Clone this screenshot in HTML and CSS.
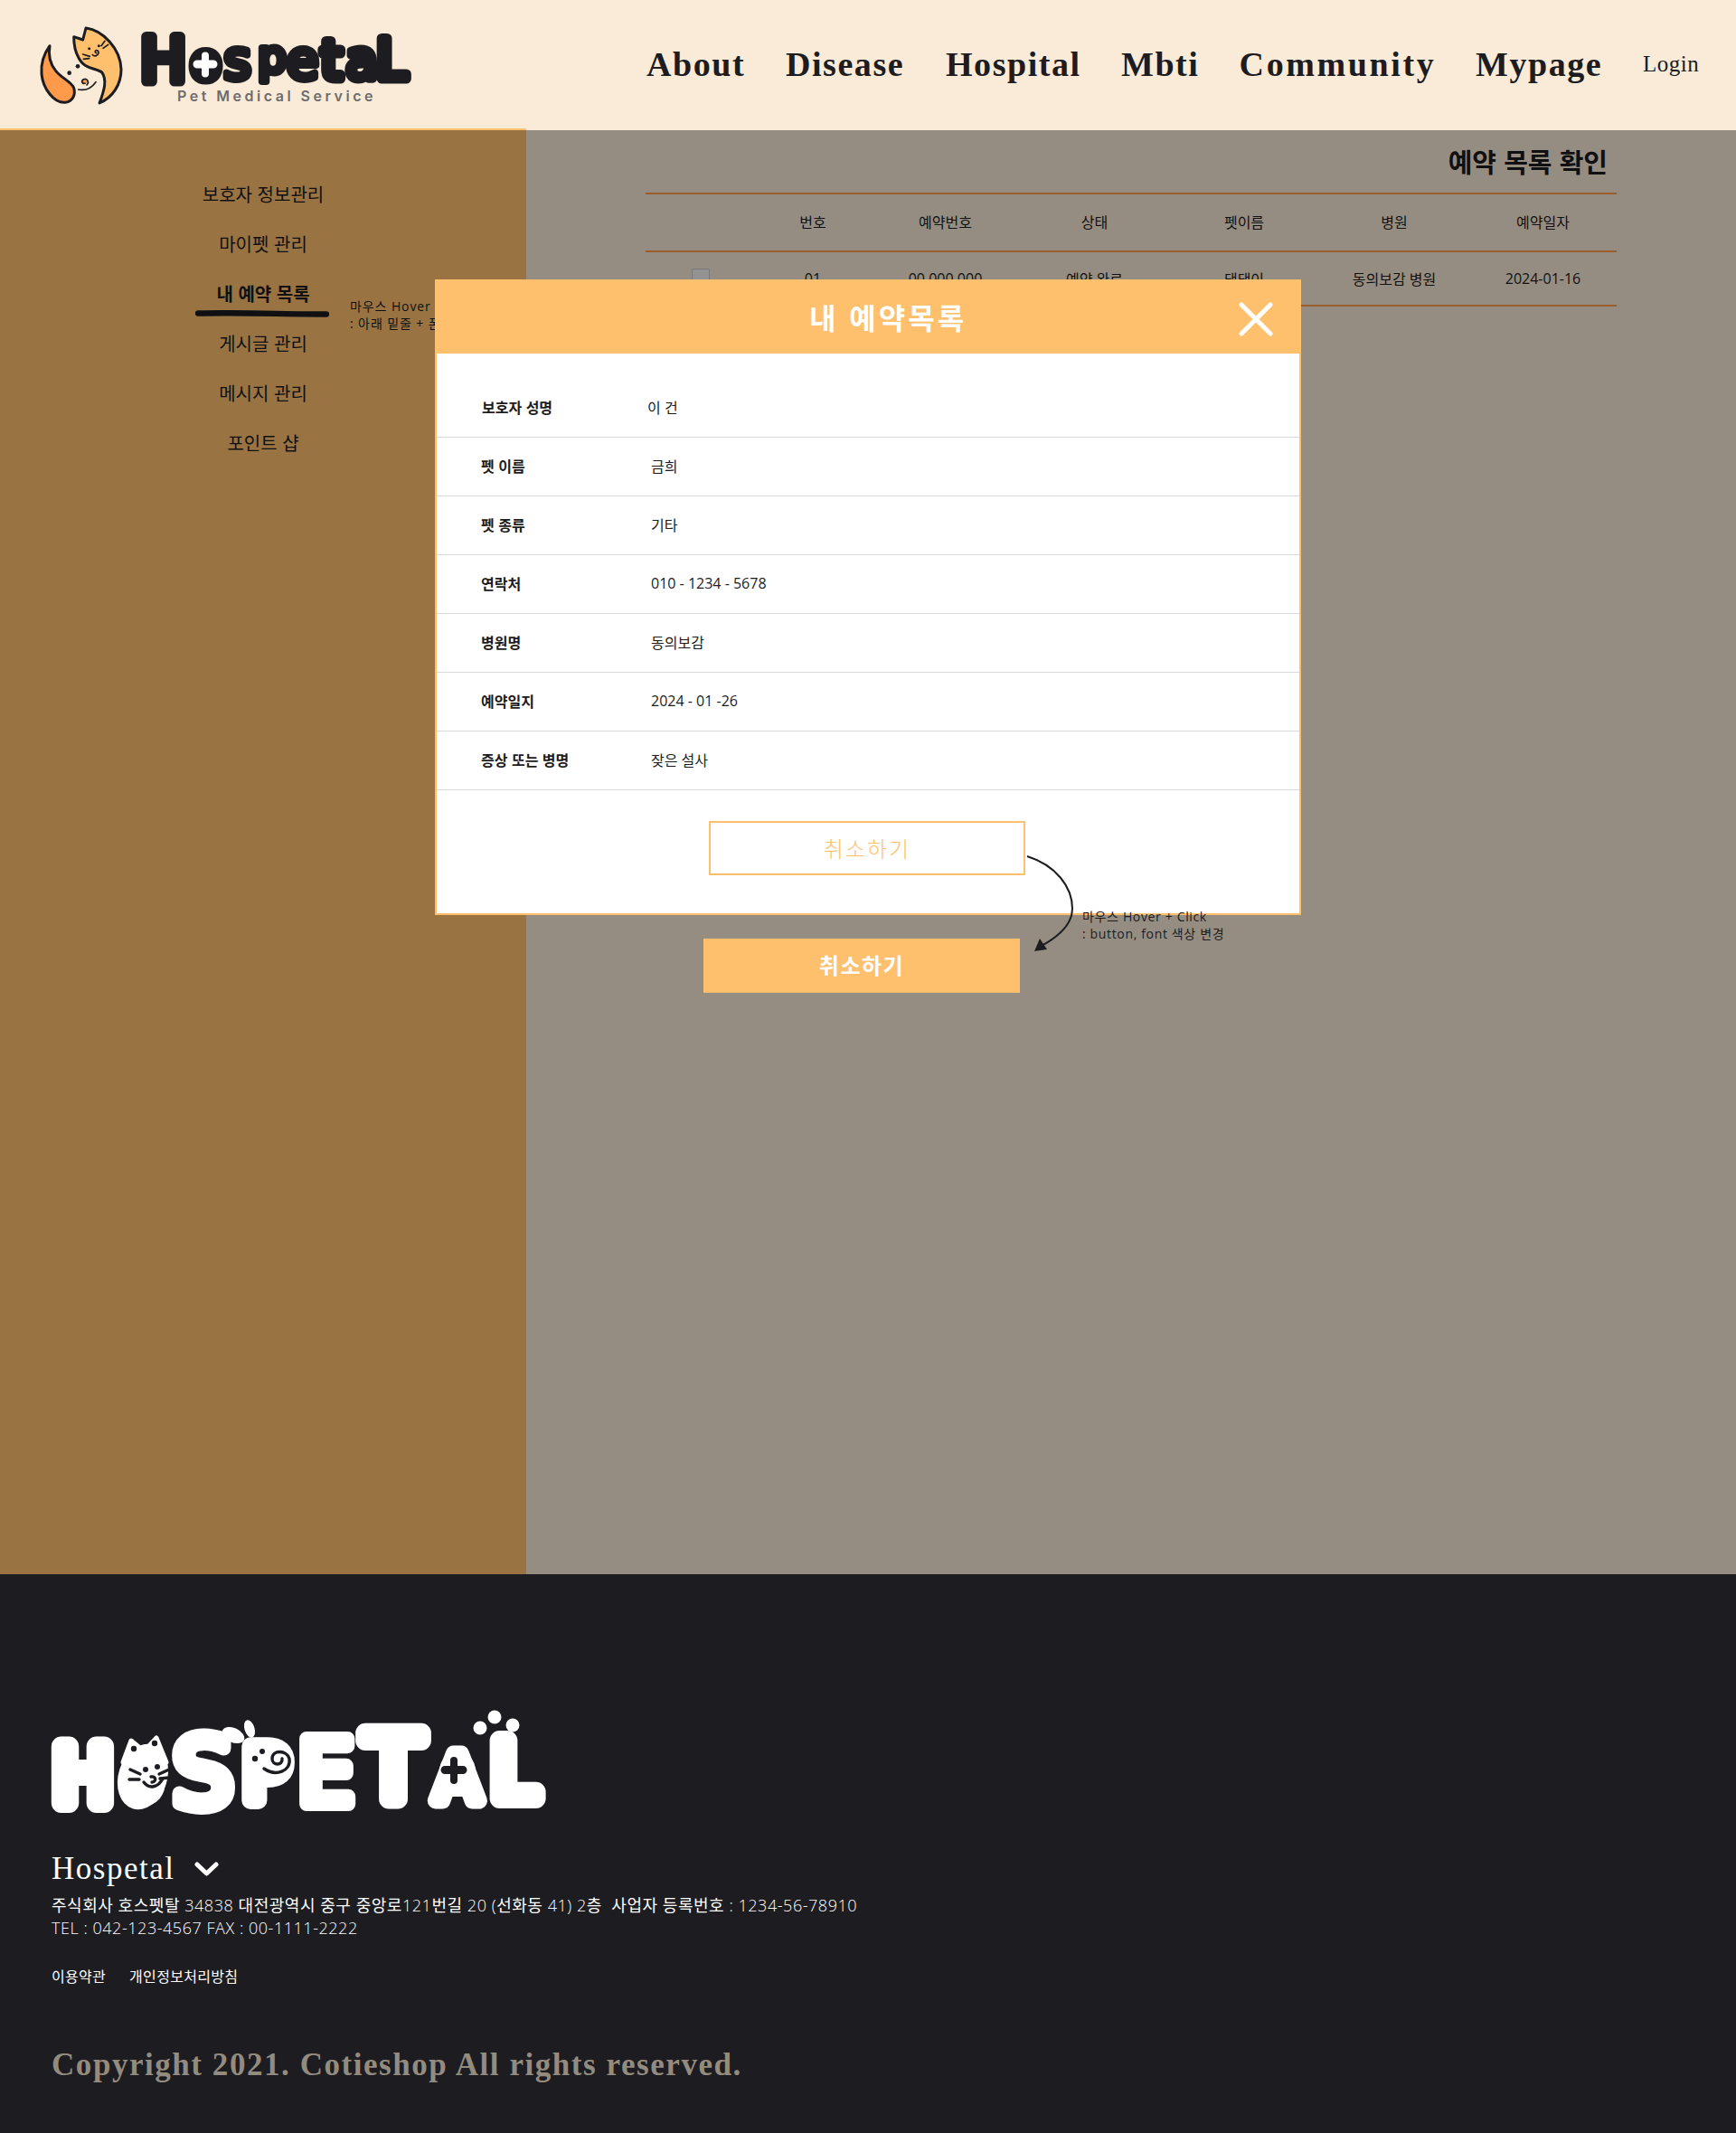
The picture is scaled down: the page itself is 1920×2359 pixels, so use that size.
FILE: index.html
```html
<!DOCTYPE html>
<html lang="ko">
<head>
<meta charset="utf-8">
<title>Hospetal</title>
<link rel="stylesheet" href="styles.css">
</head>
<body>
<header class="site-header">
  <a class="brand">
    <svg class="brand-mark" viewBox="0 0 600 330" aria-hidden="true">
      <path class="m-flame" d="M75 92C55 120 45 150 48 185C52 235 90 282 125 280C150 278 162 255 155 232C148 212 115 200 95 175C75 150 70 120 75 92Z"/>
      <path class="m-cat" d="M195 33C250 40 310 100 312 170C312 220 285 262 240 282C256 240 266 205 248 180C230 165 190 172 170 130C158 108 155 85 155 62L185 72Z"/>
      <circle class="m-dot" cx="168" cy="160" r="7"/><circle class="m-dot" cx="140" cy="182" r="7"/>
      <circle class="m-dot" cx="206" cy="101" r="4.5"/><circle class="m-dot" cx="238" cy="92" r="4.5"/>
      <path class="m-line" d="M185 120L208 127M187 136L206 134M246 92L258 76M252 100L269 88"/>
      <path class="m-line" d="M217 122C228 132 244 116 234 108C226 104 222 114 230 116"/>
      <circle class="m-nose" cx="190" cy="212" r="8"/>
      <path class="m-line" d="M170 237C195 242 214 232 228 212M198 222C208 212 198 198 186 204C178 210 184 220 192 216"/>
    </svg>
    <span class="brand-type">
      <svg class="brand-word" viewBox="0 0 300 70" role="img" aria-label="Hospetal">
        <text class="word-dark" x="24.5 71.5 106.5 145 178.5 210.5 244 277" y="61.5 58.5 59 52 59 58.5 59 58.5"><tspan font-size="68">H</tspan><tspan font-size="54">o</tspan><tspan font-size="58" stroke-width="8">s</tspan><tspan font-size="50" stroke-width="8">p</tspan><tspan font-size="58" stroke-width="8">e</tspan><tspan font-size="58">t</tspan><tspan font-size="58" stroke-width="9">a</tspan><tspan font-size="60">L</tspan></text>
        <path class="word-plus" d="M67 33.500a4 4 0 0 1 8 0v5h5a4 4 0 0 1 0 9h-5v6a4 4 0 0 1-8 0v-6h-5a4 4 0 0 1 0-9h5z"/>
      </svg>
      <span class="brand-sub">Pet Medical Service</span>
    </span>
  </a>
  <nav class="main-nav">
    <a>About</a><a>Disease</a><a>Hospital</a><a>Mbti</a><a class="wide">Community</a><a>Mypage</a>
    <a class="login">Login</a>
  </nav>
  <span class="header-line"></span>
</header>

<main class="page">
  <aside class="side">
    <a>보호자 정보관리</a>
    <a>마이펫 관리</a>
    <a class="active">내 예약 목록<svg class="scribble" viewBox="0 0 148 8" aria-hidden="true"><path d="M3 3.500C50 2.500 100 4.500 145 4.500"/></svg></a>
    <a>게시글 관리</a>
    <a>메시지 관리</a>
    <a>포인트 샵</a>
    <p class="note note-side">마우스 Hover + Click<br>: 아래 밑줄 + 폰트 변경</p>
  </aside>
  <section class="content">
    <h1 class="content-title">예약 목록 확인</h1>
    <div class="grid grid-head">
      <span></span><span>번호</span><span>예약번호</span><span>상태</span><span>펫이름</span><span>병원</span><span>예약일자</span>
    </div>
    <div class="grid grid-row">
      <span><i class="check"></i></span><span>01</span><span>00.000.000</span><span>예약 완료</span><span>댕댕이</span><span>동의보감 병원</span><span>2024-01-16</span>
    </div>
  </section>
  <div class="dim"></div>

  <div class="modal">
    <div class="modal-head">
      <h2>내 예약목록</h2>
      <svg class="close" viewBox="0 0 38 38" aria-hidden="true"><path d="M3 3L35 35M35 3L3 35"/></svg>
    </div>
    <dl class="info">
      <div class="info-row first"><dt>보호자 성명</dt><dd>이 건</dd></div>
      <div class="info-row"><dt>펫 이름</dt><dd>금희</dd></div>
      <div class="info-row"><dt>펫 종류</dt><dd>기타</dd></div>
      <div class="info-row"><dt>연락처</dt><dd>010 - 1234 - 5678</dd></div>
      <div class="info-row"><dt>병원명</dt><dd>동의보감</dd></div>
      <div class="info-row"><dt>예약일지</dt><dd>2024 - 01 -26</dd></div>
      <div class="info-row"><dt>증상 또는 병명</dt><dd>잦은 설사</dd></div>
    </dl>
    <div class="modal-foot"><button class="btn-outline">취소하기</button></div>
  </div>

  <button class="btn-fill">취소하기</button>
  <svg class="arrow" viewBox="0 0 70 120" aria-hidden="true">
    <path class="arrow-line" d="M4 4C36 14 54 38 54 62C54 78 40 92 20 103"/>
    <path class="arrow-head" d="M12 109L26 107L18 95Z"/>
  </svg>
  <p class="note note-btn">마우스 Hover + Click<br>: button, font 색상 변경</p>
</main>

<footer class="site-footer">
  <div class="foot-logo">
    <svg viewBox="0 0 560 125" role="img" aria-label="HOSPETAL">
      <text class="word-light" x="34.500 101.500 167.500 237 303.500 378 449 511.500" y="107 105 111 104 108 103 104 102"><tspan font-size="85">H</tspan><tspan font-size="60" stroke-width="8">O</tspan><tspan font-size="105" stroke-width="16">S</tspan><tspan font-size="82" stroke-width="20">P</tspan><tspan font-size="98" stroke-width="16">E</tspan><tspan font-size="100">T</tspan><tspan font-size="72" stroke-width="18">A</tspan><tspan font-size="88">L</tspan></text>
      <path class="ear" d="M79 62L88 38L100 48ZM104 48L116 35L127 62Z"/>
      <ellipse class="word-fill" cx="101" cy="78" rx="27" ry="37" transform="rotate(18 101 78)"/>
      <circle class="ink" cx="91" cy="47" r="3.200"/><circle class="ink" cx="114" cy="41" r="3.200"/>
      <circle class="ink" cx="104" cy="70" r="3"/><circle class="ink" cx="117" cy="67" r="3"/>
      <path class="ink-line" d="M87 70L98 75M86 81L97 81M119 75L130 70M120 80L130 79"/>
      <path class="ink-line" d="M102 84C108 92 118 90 123 80M111 84C116 84 116 77 110 78"/>
      <ellipse class="word-fill" cx="201" cy="32" rx="13" ry="8" transform="rotate(25 201 32)"/>
      <ellipse class="word-fill" cx="219" cy="25" rx="5.500" ry="10" transform="rotate(-18 219 25)"/>
      <ellipse class="word-fill" cx="243" cy="58" rx="20" ry="21"/>
      <circle class="ink" cx="225" cy="58" r="3.200"/><circle class="ink" cx="233" cy="50" r="3"/>
      <path class="ink-line" d="M235 69C248 78 265 72 263 58C260 48 244 48 244 58C244 66 256 66 255 58"/>
      <ellipse class="word-fill" cx="449" cy="72" rx="20" ry="22"/>
      <path class="word-plus-dark" d="M441 60a4 4 0 0 1 8 0v6h6a4 4 0 0 1 0 9h-6v7a4 4 0 0 1-8 0v-7h-6a4 4 0 0 1 0-9h6z"/>
      <circle class="word-fill" cx="474" cy="24" r="7.500"/><circle class="word-fill" cx="490" cy="12" r="7.500"/><circle class="word-fill" cx="510" cy="21" r="7.500"/>
    </svg>
  </div>
  <div class="foot-brand">Hospetal <svg class="chev" viewBox="0 0 27 16" aria-hidden="true"><path d="M3 3L13.500 13L24 3"/></svg></div>
  <address class="foot-addr">
    <div><b>주식회사 호스펫탈</b> 34838 <b>대전광역시 중구 중앙로</b>121<b>번길</b> 20 (<b>선화동</b> 41) 2<b>층</b> &nbsp;<b>사업자 등록번호</b> : 1234-56-78910</div>
    <div>TEL : 042-123-4567 FAX : 00-1111-2222</div>
  </address>
  <div class="foot-links"><a>이용약관</a><a>개인정보처리방침</a></div>
  <p class="copyright">Copyright 2021. Cotieshop All rights reserved.</p>
</footer>
</body>
</html>
```

FILE: styles.css
```css
* { box-sizing: border-box; }
html, body { margin: 0; padding: 0; }
body {
  width: 1920px;
  font-family: "Open Sans", "Noto Sans CJK KR", sans-serif;
  color: #1c1c21;
  background: #f9ebd8;
}
h1, h2, p, dl, dd { margin: 0; }
address { font-style: normal; }

.site-header {
  position: relative;
  height: 144px;
  background: #f9ebd8;
  display: flex;
  justify-content: space-between;
  align-items: center;
  padding: 0 41px 0 30px;
}
.header-line { position: absolute; left: 0; bottom: 0; width: 582px; height: 2px; background: #ffc06e; }
.brand { display: flex; align-items: flex-start; height: 110px; margin-top: 6px; }
.brand-mark { width: 200px; height: 110px; flex: none; }
.m-flame { fill: #ff9a4a; stroke: #1c1c21; stroke-width: 9; stroke-linejoin: round; }
.m-cat { fill: #ffc06e; stroke: #1c1c21; stroke-width: 9; stroke-linejoin: round; }
.m-dot { fill: #1c1c21; }
.m-nose { fill: #ff9a4a; }
.m-line { fill: none; stroke: #1c1c21; stroke-width: 5; stroke-linecap: round; }
.brand-type { display: flex; flex-direction: column; margin-left: -74px; width: 300px; }
.brand-word { width: 300px; height: 70px; margin-top: 8px; display: block; overflow: visible; }
.word-dark {
  font-family: "DejaVu Sans", sans-serif; font-weight: 400; font-size: 54px; text-anchor: middle;
  fill: #1c1c21; stroke: #1c1c21; stroke-width: 11; stroke-linejoin: round; stroke-linecap: round;
}
.word-plus { fill: #fff; }
.brand-sub {
  font-family: Inter, sans-serif; font-weight: 600; font-size: 16px; letter-spacing: 3.5px;
  color: #6c6c6e; margin: -2px 0 0 40px; line-height: 20px; white-space: nowrap;
}
.main-nav {
  display: grid;
  grid-template-columns: 154px 177px 194px 130.6px 261.4px 185px 62px;
  align-items: center;
  padding-bottom: 2px;
  font-family: "Liberation Serif", serif; font-weight: 700; font-size: 38px; letter-spacing: 1.55px; color: #1c1c21;
  white-space: nowrap;
}
.main-nav .wide { letter-spacing: 2.6px; }
.main-nav .login { font-weight: 400; font-size: 25px; letter-spacing: .5px; }

.page { position: relative; display: flex; height: 1597px; }
.side { width: 582px; flex: none; background: #ffc06e; padding-top: 43px; display: flex; flex-direction: column; align-items: center; position: relative; }
.side a { position: relative; font-size: 20px; line-height: 55px; font-family: "Noto Sans CJK KR", sans-serif; }
.side .active { font-weight: 700; }
.scribble { position: absolute; left: -23px; top: 46px; width: 148px; height: 8px; }
.scribble path { fill: none; stroke: #1c1c21; stroke-width: 6.5; stroke-linecap: round; }
.note { position: absolute; font-size: 14px; line-height: 19px; letter-spacing: .9px; white-space: nowrap; }
.note-side { left: 387px; top: 185px; }
.content { flex: 1; padding: 0 132px; display: flex; flex-direction: column; }
.content-title { height: 69px; padding: 13px 10px 0 0; text-align: right; font-size: 29px; line-height: 42px; font-weight: 700; font-family: "Noto Sans CJK KR", sans-serif; }
.grid { display: grid; grid-template-columns: 121px 128px 165px 165px 166px 166px 163px; align-items: center; text-align: center; font-size: 16px; border-bottom: 2px solid #ff9a4a; }
.grid-head { height: 66px; padding-bottom: 2px; border-top: 2px solid #ff9a4a; }
.grid-row { height: 60px; }
.check { display: block; width: 20px; height: 20px; margin: -2px auto 0; background: #f4f4f6; border: 1px solid #c8c8c8; border-radius: 2px; }

.dim { position: absolute; inset: 0; background: rgba(0, 0, 0, .4); }

.modal { position: absolute; left: 481px; top: 165px; width: 958px; height: 703px; background: #fff; border: 2px solid #ffc06e; display: flex; flex-direction: column; }
.modal-head { position: relative; margin: -2px -2px 0; padding-left: 44px; background: #ffc06e; display: flex; align-items: center; justify-content: center; flex: none; height: 82px; }
.modal-head h2 { color: #fff; font-size: 32px; line-height: 1; font-weight: 700; letter-spacing: 3px; font-family: "Noto Sans CJK KR", sans-serif; }
.close { position: absolute; right: 31px; top: 25px; width: 38px; height: 38px; }
.close path { fill: none; stroke: #fff; stroke-width: 5; stroke-linecap: round; }
.info { flex: none; }
.info-row { display: flex; align-items: center; height: 65px; padding: 0 0 2px 49px; border-bottom: 1px solid #d9d9d9; font-size: 16px; }
.info-row.first { height: 93px; padding-top: 27px; padding-left: 50px; }
.info-row dt { width: 188px; font-weight: 700; font-family: "Noto Sans CJK KR", sans-serif; }
.info-row.first dt { width: 183px; }
.modal-foot { flex: 1; padding-top: 34px; padding-left: 301px; }
.btn-outline { display: block; width: 350px; height: 60px; background: #fff; border: 2px solid #ffc06e; color: #ffc06e; font: 300 24px "Noto Sans CJK KR", sans-serif; letter-spacing: 2px; padding: 0 0 2px; }
.btn-fill { position: absolute; left: 778px; top: 894px; width: 350px; height: 60px; background: #ffc06e; border: 0; color: #fff; font: 700 24px "Noto Sans CJK KR", sans-serif; letter-spacing: 1.5px; padding: 0 0 3px; }
.arrow { position: absolute; left: 1132px; top: 799px; width: 70px; height: 120px; overflow: visible; }
.arrow-line { fill: none; stroke: #1c1c21; stroke-width: 2; }
.arrow-head { fill: #1c1c21; }
.note-btn { left: 1197px; top: 860px; letter-spacing: .65px; }

.site-footer { height: 618px; background: #1c1c21; color: #fff; padding: 146px 0 0 57px; position: relative; }
.foot-logo { width: 560px; height: 125px; }
.foot-logo svg { display: block; width: 560px; height: 125px; overflow: visible; }
.word-light { font-family: "DejaVu Sans", sans-serif; font-weight: 400; font-size: 88px; text-anchor: middle; fill: #fff; stroke: #fff; stroke-width: 22; stroke-linejoin: round; stroke-linecap: round; }
.word-fill { fill: #fff; }
.ear { fill: #fff; stroke: #fff; stroke-width: 5; stroke-linejoin: round; }
.word-plus-dark { fill: #1c1c21; }
.ink { fill: #1c1c21; }
.ink-line { fill: none; stroke: #1c1c21; stroke-width: 3.4; stroke-linecap: round; }
.foot-brand { display: flex; align-items: center; gap: 22px; margin-top: 35px; font-family: "Liberation Serif", serif; font-size: 35px; letter-spacing: 1.5px; line-height: 40px; }
.chev { width: 27px; height: 16px; }
.chev path { fill: none; stroke: #fff; stroke-width: 5; stroke-linecap: round; stroke-linejoin: round; }
.foot-addr { margin-top: 8px; font-size: 18px; line-height: 25px; font-weight: 300; letter-spacing: .54px; }
.foot-addr b { font-weight: 400; }
.foot-links { display: flex; gap: 26px; margin-top: 29px; font-size: 16px; letter-spacing: .3px; line-height: 22px; font-family: "Noto Sans CJK KR", sans-serif; }
.copyright { margin-top: 66px; font-family: "Liberation Serif", serif; font-weight: 700; font-size: 35px; letter-spacing: 1.55px; line-height: 44px; color: #948b7f; }
```
